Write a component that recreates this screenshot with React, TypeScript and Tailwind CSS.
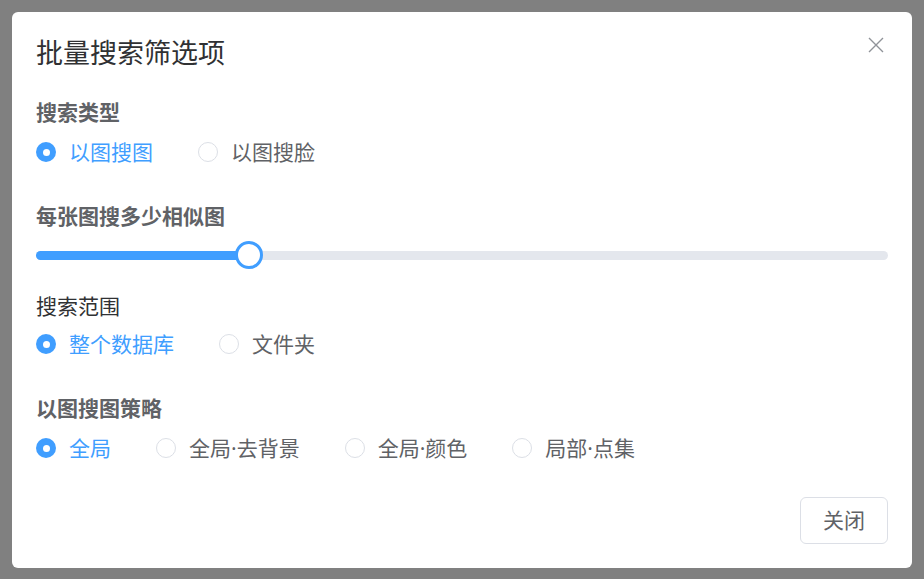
import { useState } from 'react';

type Option = { value: string; label: string };

const FONT = "font-['Noto_Sans','Noto_Sans_CJK_SC',sans-serif]";

function RadioGroup({
  options,
  value,
  onChange,
}: {
  options: Option[];
  value: string;
  onChange: (v: string) => void;
}) {
  return (
    <div className="flex h-[28px] items-center gap-[45px]">
      {options.map((opt) => {
        const checked = opt.value === value;
        return (
          <label
            key={opt.value}
            className="flex cursor-pointer items-center gap-[13px]"
            onClick={() => onChange(opt.value)}
          >
            {checked ? (
              <span className="flex h-[20px] w-[20px] items-center justify-center rounded-full bg-[#409eff]">
                <span className="h-[7px] w-[7px] rounded-full bg-white" />
              </span>
            ) : (
              <span className="h-[20px] w-[20px] rounded-full border border-[#dcdfe6] bg-white" />
            )}
            <span
              className={`text-[21px] leading-[28px] ${checked ? 'text-[#409eff]' : 'text-[#606266]'}`}
            >
              {opt.label}
            </span>
          </label>
        );
      })}
    </div>
  );
}

function Slider({ value }: { value: number }) {
  return (
    <div className="relative flex h-[30px] items-center">
      <div className="h-[9px] w-full rounded-full bg-[#e4e7ed]">
        <div className="h-full rounded-full bg-[#409eff]" style={{ width: `${value}%` }} />
      </div>
      <div
        className="absolute top-1/2 h-[28px] w-[28px] -translate-x-1/2 -translate-y-1/2 rounded-full border-[3px] border-[#409eff] bg-white"
        style={{ left: `${value}%` }}
      />
    </div>
  );
}

export default function App() {
  const [searchType, setSearchType] = useState('image');
  const [scope, setScope] = useState('db');
  const [strategy, setStrategy] = useState('global');

  return (
    <div className={`flex h-[579px] w-[924px] items-start justify-center bg-[#808080] pt-[12px] ${FONT}`}>
      <div className="flex w-[900px] flex-col rounded-[6px] bg-white pb-[24px] pl-[24px] pr-[24px] pt-[24px]">
        {/* Header */}
        <div className="flex h-[34px] items-center justify-between">
          <span className="text-[27px] leading-[34px] text-[#303133]">批量搜索筛选项</span>
          <button className="mr-[3px] -mt-[16px] text-[#909399]">
            <svg width="18" height="18" viewBox="0 0 18 18" fill="none" stroke="currentColor" strokeWidth="1.4">
              <path d="M2 2L16 16M16 2L2 16" />
            </svg>
          </button>
        </div>

        <div className="mt-[28px] text-[21px] font-bold leading-[28px] text-[#606266]">搜索类型</div>
        <div className="mt-[12px]">
          <RadioGroup
            value={searchType}
            onChange={setSearchType}
            options={[
              { value: 'image', label: '以图搜图' },
              { value: 'face', label: '以图搜脸' },
            ]}
          />
        </div>

        <div className="mt-[36px] text-[21px] font-bold leading-[28px] text-[#606266]">每张图搜多少相似图</div>
        <div className="mt-[10px]">
          <Slider value={25} />
        </div>

        <div className="mt-[22px] text-[21px] leading-[28px] text-[#303133]">搜索范围</div>
        <div className="mt-[10px]">
          <RadioGroup
            value={scope}
            onChange={setScope}
            options={[
              { value: 'db', label: '整个数据库' },
              { value: 'folder', label: '文件夹' },
            ]}
          />
        </div>

        <div className="mt-[36px] text-[21px] font-bold leading-[28px] text-[#606266]">以图搜图策略</div>
        <div className="mt-[12px]">
          <RadioGroup
            value={strategy}
            onChange={setStrategy}
            options={[
              { value: 'global', label: '全局' },
              { value: 'global-bg', label: '全局·去背景' },
              { value: 'global-color', label: '全局·颜色' },
              { value: 'local', label: '局部·点集' },
            ]}
          />
        </div>

        {/* Footer */}
        <div className="mt-[35px] flex justify-end">
          <button className="h-[47px] w-[88px] rounded-[6px] border border-[#dcdfe6] bg-white text-[21px] text-[#606266]">
            关闭
          </button>
        </div>
      </div>
    </div>
  );
}
